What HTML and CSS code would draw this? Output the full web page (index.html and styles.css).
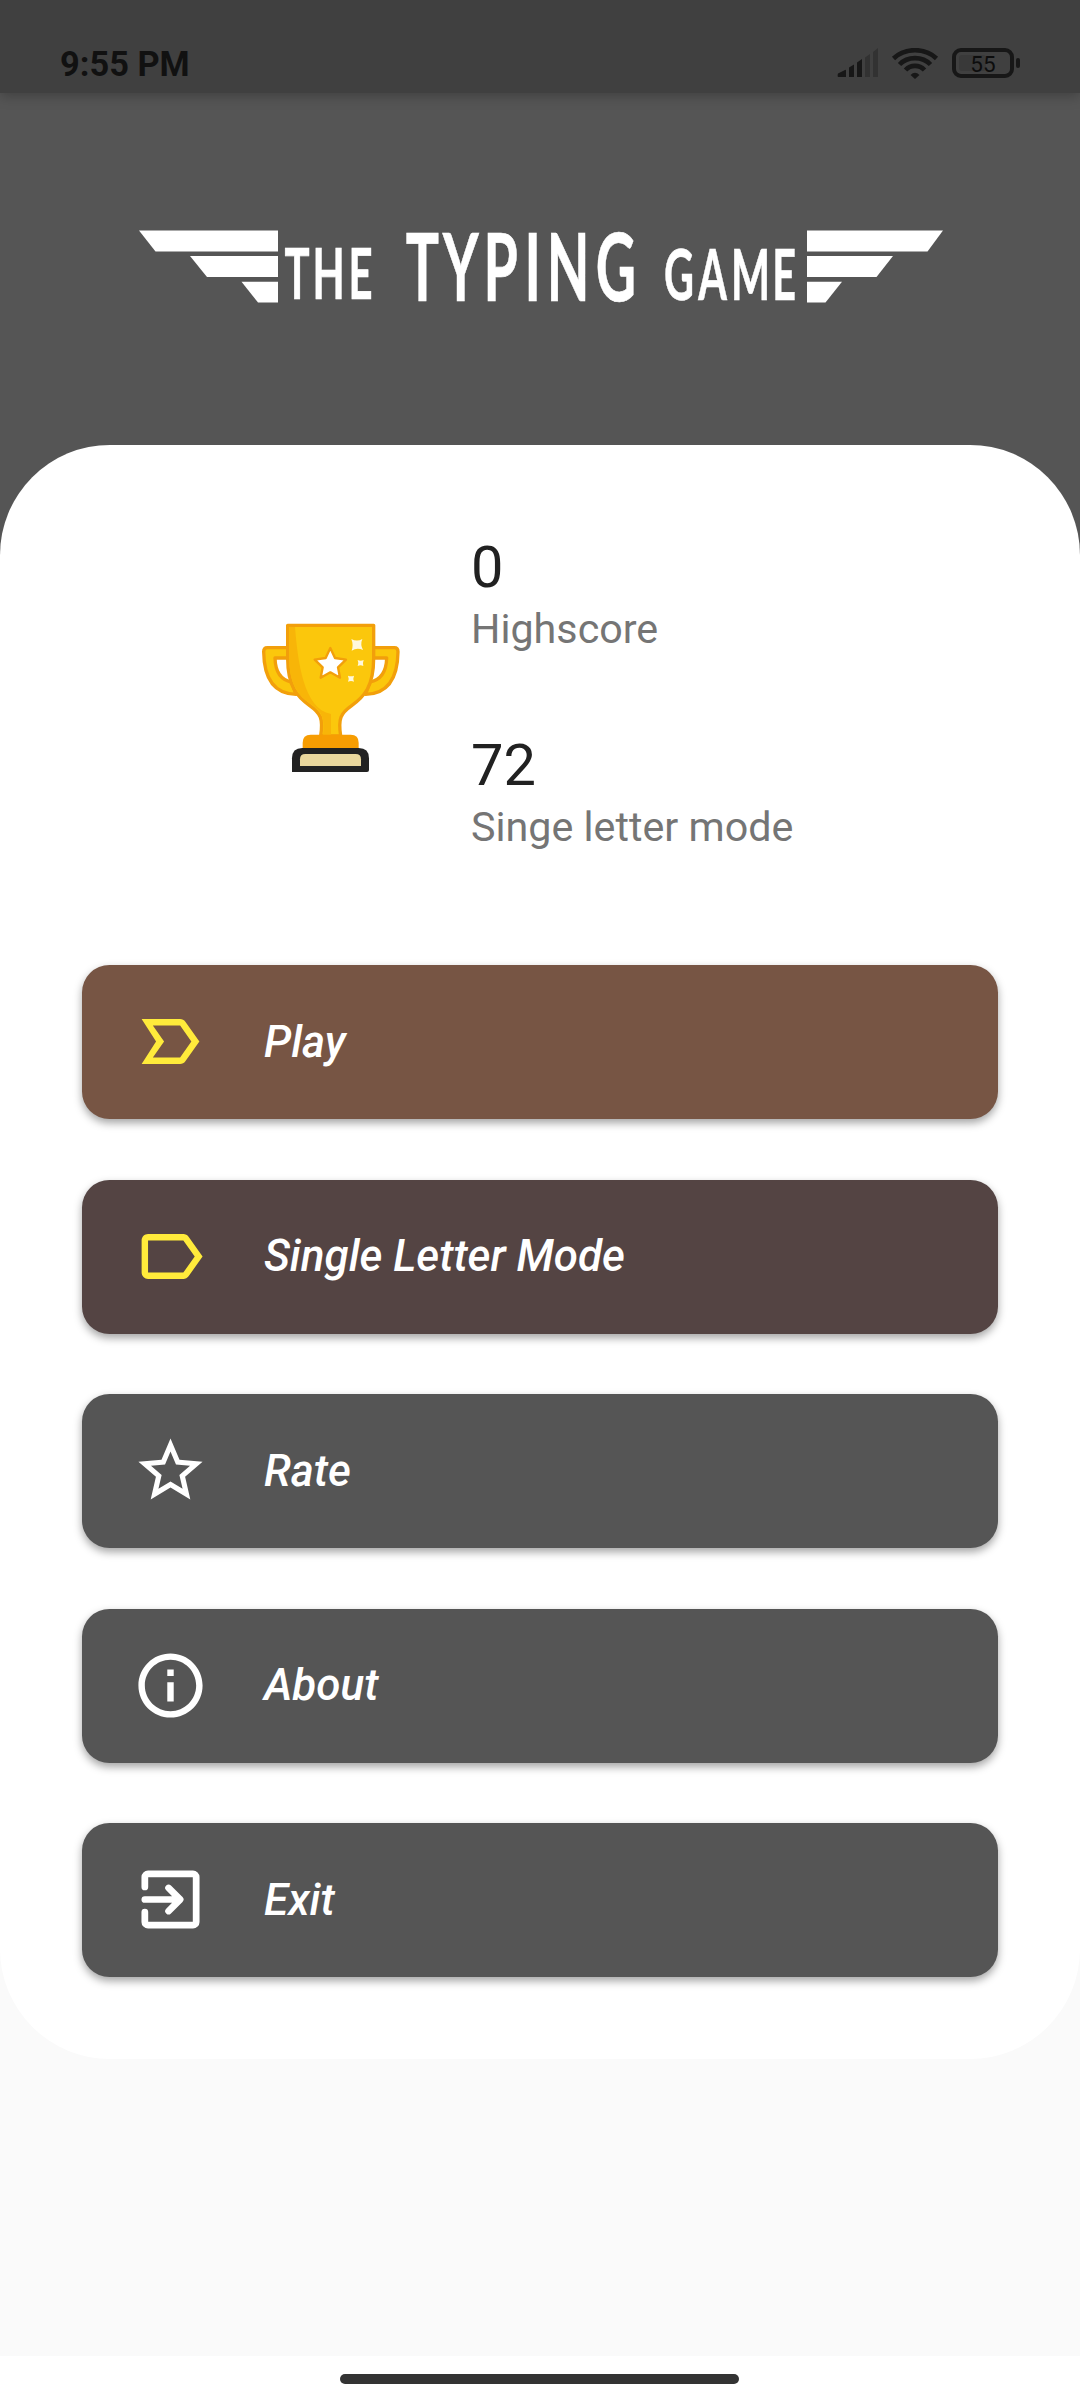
FILE: index.html
```html
<!DOCTYPE html>
<html lang="en">
<head>
<meta charset="utf-8">
<title>The Typing Game</title>
<link rel="stylesheet" href="styles.css">
</head>
<body>
<div class="screen">
  <header class="status">
    <span class="clock">9:55 PM</span>
    <svg class="indicators" width="190" height="40" viewBox="0 0 190 40">
      <g fill="#171717">
        <path d="M2 25.500L9 22q1-.5 1 .5V29H2.500Q1 29 2 25.500z"/>
        <path d="M13 19.500L18 16.500V29H13z"/>
        <path d="M21 14.500L26 11V29H21z"/>
      </g>
      <g fill="#323232">
        <path d="M29 9.500L34 6V29H29z"/>
        <path d="M37 4L42 0V29H37z"/>
      </g>
      <g fill="none" stroke="#171717" stroke-width="4.600">
        <path d="M57.500 10.500C69 -.600 89 -.600 100.500 10.500"/>
        <path d="M63.500 16.500C71.500 8 86.500 8 94.500 16.500"/>
        <path d="M69.500 22C74.500 16.500 83.500 16.500 88.500 22"/>
      </g>
      <path fill="#171717" d="M74.500 27Q79 22.500 83.500 27L79 31z"/>
      <rect x="118" y="2" width="58" height="26" rx="7" fill="none" stroke="#171717" stroke-width="4"/>
      <rect x="123" y="7" width="27" height="16" rx="3" fill="#393939"/>
      <rect x="180" y="10" width="4" height="10" rx="2" fill="#171717"/>
      <text class="battery" x="147" y="23.500" text-anchor="middle">55</text>
    </svg>
  </header>

  <div class="banner">
    <svg class="logo" width="810" height="160" viewBox="136 186 810 160" fill="#fff">
      <path d="M139 230.500H278V251.500H155.500z"/>
      <path d="M190 256H278V277H207z"/>
      <path d="M241.500 281.700H278V302.500H258z"/>
      <path d="M807 230.500H943L927.500 251.500H807z"/>
      <path d="M807 256H893L876.500 277H807z"/>
      <path d="M807 281.700H842L825.500 302.500H807z"/>
      <g class="wordmark" text-anchor="middle">
        <text font-size="71" transform="translate(0 298.600) scale(.59 1)" x="503.500 557 611">THE</text>
        <text font-size="94" transform="translate(0 300.700) scale(.59 1)" x="716 781 848.500 903 963 1044">TYPING</text>
        <text font-size="70" transform="translate(0 300) scale(.59 1)" x="1151 1207.600 1272 1329">GAME</text>
      </g>
    </svg>
  </div>

  <main class="card">
    <section class="scores">
      <svg class="trophy" width="180" height="190" viewBox="0 0 540 570">
        <g fill="#fbc70c" stroke="#f29f0b" stroke-width="10" stroke-linejoin="round">
          <path d="M150 143H82Q71 143 71 155C72 232 98 281 168 283L155 246C122 240 106 215 105 174H150z"/>
          <path d="M394 143H463Q474 143 474 155C473 232 447 281 377 283L389 246C423 240 439 215 440 174H394z"/>
          <path d="M143 76H401V175C401 260 372 290 335 317C302 340 294 356 302 408H242C250 356 242 340 209 317C172 290 143 260 143 175z"/>
        </g>
        <path fill="#f8b508" d="M148 81H165C173 180 190 327 273 342V406H249C255 355 246 335 213 313C172 283 148 253 148 175z"/>
        <path fill="#fff" stroke="#f29f0b" stroke-width="7" stroke-linejoin="round" d="M271 144L285 174L318 179L294 202L300 233L271 217L242 233L248 202L224 179L257 174z"/>
        <g fill="#fff8dc">
          <path d="M334 117Q351 126 367 117Q360 134 369 150Q351 142 335 152Q341 134 334 117z"/>
          <path d="M353 180Q362 184 371 180Q367 189 370 198Q361 194 353 198Q357 189 353 180z"/>
          <path d="M324 227Q333 231 342 227Q338 236 342 245Q333 241 324 245Q328 236 324 227z"/>
        </g>
        <path fill="#f79d02" d="M188 445V428Q188 404 212 404H332Q356 404 356 428V445z"/>
        <path fill="#222" d="M156 516V475Q156 444 187 444H356Q387 444 387 475V510Q387 516 381 516z"/>
        <path fill="#ead79d" d="M180 498V478Q180 462 196 462H347Q363 462 363 478V498z"/>
      </svg>
      <div class="stats">
        <div>
          <div class="value">0</div>
          <div class="label">Highscore</div>
        </div>
        <div>
          <div class="value">72</div>
          <div class="label">Singe letter mode</div>
        </div>
      </div>
    </section>

    <nav class="menu">
      <button class="item play">
        <svg class="icon" viewBox="0 0 24 24"><path d="M15 5H3l4.500 7L3 19h12c.65 0 1.260-.31 1.630-.84L21 12l-4.370-6.160C16.260 5.310 15.650 5 15 5zm0 12H6.500l3.500-5-3.500-5H15l3.500 5-3.500 5z"/></svg>
        <span>Play</span>
      </button>
      <button class="item single">
        <svg class="icon" viewBox="0 0 24 24"><path d="M17.630 5.840C17.270 5.330 16.670 5 16 5L5 5.010C3.900 5.010 3 5.900 3 7v10c0 1.100.9 1.990 2 1.990L16 19c.67 0 1.270-.33 1.630-.84L22 12l-4.370-6.160zM16 17H5V7h11l3.550 5L16 17z"/></svg>
        <span>Single Letter Mode</span>
      </button>
      <button class="item">
        <svg class="icon" viewBox="0 0 24 24"><path d="M22 9.240l-7.190-.62L12 2 9.190 8.630 2 9.240l5.460 4.730L5.820 21 12 17.270 18.180 21l-1.630-7.030L22 9.240zM12 15.400l-3.760 2.270 1-4.280-3.320-2.880 4.380-.38L12 6.100l1.710 4.040 4.380.38-3.320 2.880 1 4.280L12 15.400z"/></svg>
        <span>Rate</span>
      </button>
      <button class="item">
        <svg class="icon" viewBox="0 0 24 24"><path d="M11 7h2v2h-2zm0 4h2v6h-2zm1-9C6.480 2 2 6.480 2 12s4.480 10 10 10 10-4.480 10-10S17.520 2 12 2zm0 18c-4.410 0-8-3.590-8-8s3.590-8 8-8 8 3.590 8 8-3.590 8-8 8z"/></svg>
        <span>About</span>
      </button>
      <button class="item">
        <svg class="icon line" viewBox="0 0 24 24"><path d="M4 8.100V5a1 1 0 0 1 1-1h14a1 1 0 0 1 1 1v14a1 1 0 0 1-1 1H5a1 1 0 0 1-1-1v-3.100M4 12h10.500M11.400 8.400L15 12l-3.600 3.600"/></svg>
        <span>Exit</span>
      </button>
    </nav>
  </main>

  <footer class="navbar"><div class="handle"></div></footer>
</div>
</body>
</html>
```

FILE: styles.css
```css
* { box-sizing: border-box; }

body {
  margin: 0;
  font-family: Roboto, sans-serif;
}

.screen {
  width: 1080px;
  height: 2400px;
  display: flex;
  flex-direction: column;
  background: linear-gradient(#555 0 700px, #fafafa 700px);
}

.status {
  flex: none;
  height: 93px;
  padding: 0 54px 0 60px;
  display: flex;
  justify-content: space-between;
  align-items: flex-start;
  background: #404040;
  box-shadow: 0 3px 12px rgba(0, 0, 0, .25);
}

.clock {
  margin-top: 44px;
  font-size: 34.4px;
  line-height: 40px;
  font-weight: 700;
  color: #111;
}

.indicators { margin-top: 48px; }

.battery {
  font-size: 22.5px;
  fill: #0d0d0d;
}

.banner {
  flex: none;
  height: 352px;
  padding: 93px 0 0 136px;
}

.logo { display: block; }

.wordmark {
  font-family: Lato, sans-serif;
  font-weight: 700;
  stroke: #fff;
  stroke-width: .5;
}

.wordmark text { vector-effect: non-scaling-stroke; }

.card {
  flex: none;
  height: 1614px;
  padding: 90px 82px 0;
  border-radius: 110px;
  background: #fff;
}

.scores {
  height: 430px;
  padding-left: 158px;
  display: flex;
  align-items: flex-start;
  gap: 51px;
}

.trophy {
  flex: none;
  margin-top: 65px;
}

.stats {
  display: flex;
  flex-direction: column;
  gap: 74px;
}

.value {
  font-size: 57.75px;
  line-height: 64px;
  color: #212121;
}

.label {
  font-size: 41.25px;
  line-height: 60px;
  color: #757575;
}

.menu {
  display: flex;
  flex-direction: column;
  gap: 60.5px;
}

.item {
  height: 154px;
  padding: 0 50px 1px;
  display: flex;
  align-items: center;
  gap: 55px;
  border: 0;
  border-radius: 27.5px;
  background: #555;
  box-shadow: 0 4px 8px rgba(0, 0, 0, .36);
  color: #fff;
  font: italic 500 44px/52px Roboto, sans-serif;
}

.play { background: #775544; }
.single { background: #544443; }

.icon {
  flex: none;
  width: 77px;
  height: 77px;
  fill: #fff;
}

.play .icon,
.single .icon { fill: #ffeb3b; }

.item .line {
  fill: none;
  stroke: #fff;
  stroke-width: 2.1;
  stroke-linecap: round;
  stroke-linejoin: round;
}

.navbar {
  height: 44px;
  margin-top: auto;
  padding: 18px 0 0 340px;
  background: #fff;
}

.handle {
  width: 399px;
  height: 10px;
  border-radius: 5px;
  background: #333;
}
```
